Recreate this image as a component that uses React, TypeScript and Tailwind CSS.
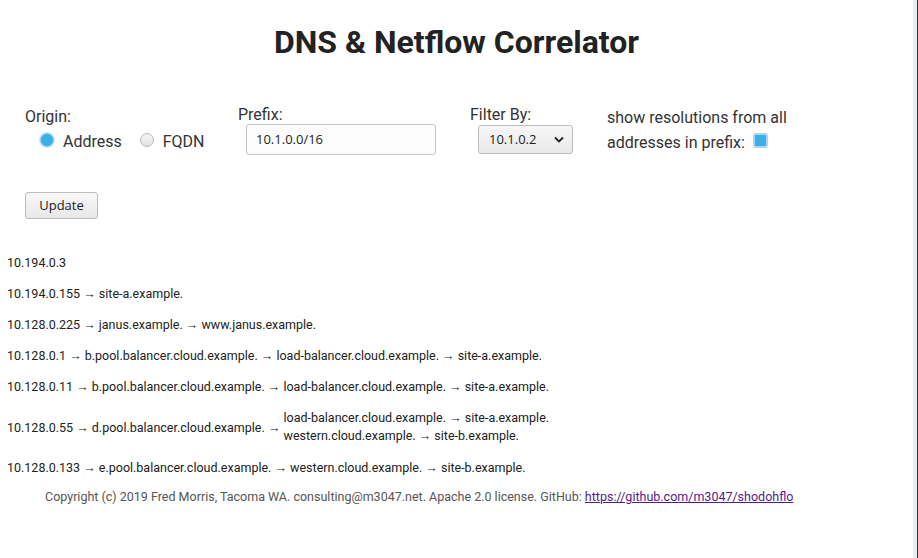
import React from "react";

const rows: string[][] = [
  ["10.194.0.3"],
  ["10.194.0.155", "site-a.example."],
  ["10.128.0.225", "janus.example.", "www.janus.example."],
  ["10.128.0.1", "b.pool.balancer.cloud.example.", "load-balancer.cloud.example.", "site-a.example."],
  ["10.128.0.11", "b.pool.balancer.cloud.example.", "load-balancer.cloud.example.", "site-a.example."],
];

function Chain({ parts }: { parts: string[] }) {
  return <span>{parts.join(" \u2192 ")}</span>;
}

function Radio({ checked }: { checked?: boolean }) {
  return checked ? (
    <span className="block h-[14px] w-[14px] shrink-0 rounded-full border border-[#93cef0] bg-[#3daee9] shadow-[0_0_0_1px_#cfe9f8]" />
  ) : (
    <span className="block h-[14px] w-[14px] shrink-0 rounded-full border border-[#b9b9b9] bg-gradient-to-b from-[#f4f4f4] to-[#e4e4e4]" />
  );
}

export default function App() {
  return (
    <div className="flex min-h-screen bg-white font-['Roboto',sans-serif] text-[#333]">
      <div className="flex-1">
        <h1 className="pt-[23px] text-center text-[32px] font-bold leading-[38px] text-[#222]">
          DNS &amp; Netflow Correlator
        </h1>

        <div className="mt-[44px] flex items-start pl-[25px] text-[16px]">
          <div className="w-[213px] pt-[2px]">
            <div className="leading-[20px]">Origin:</div>
            <div className="ml-[15px] mt-[3px] flex h-[20px] items-center">
              <Radio checked />
              <span className="ml-[9px] mt-[3px]">Address</span>
              <span className="ml-[18px]">
                <Radio />
              </span>
              <span className="ml-[9px] mt-[3px]">FQDN</span>
            </div>
          </div>

          <div className="w-[232px]">
            <div className="leading-[19px]">Prefix:</div>
            <div className="ml-[8px] flex h-[31px] w-[190px] items-center rounded-[3px] border border-[#c4c4c4] bg-[#fcfcfc] pl-[9px] font-['Open_Sans',sans-serif] text-[13px] text-[#222]">
              10.1.0.0/16
            </div>
          </div>

          <div className="w-[137px]">
            <div className="leading-[20px]">Filter By:</div>
            <div className="ml-[8px] flex h-[29px] w-[95px] items-center justify-between rounded-[3px] border border-[#bdbdbd] bg-gradient-to-b from-[#f7f7f7] to-[#e9e9e9] pl-[10px] pr-[8px] font-['Open_Sans',sans-serif] text-[13px] text-[#222]">
              <span>10.1.0.2</span>
              <svg width="10" height="7" viewBox="0 0 10 7" fill="none">
                <path d="M1 1.5 5 5.5 9 1.5" stroke="#222" strokeWidth="1.8" />
              </svg>
            </div>
          </div>

          <div className="leading-[25px]">
            <div>show resolutions from all</div>
            <div className="flex items-center">
              addresses in prefix:
              <span className="ml-[8px] mb-[4px] h-[15px] w-[15px] rounded-[3px] border-2 border-[#a6d8f4] bg-[#3daee9]" />
            </div>
          </div>
        </div>

        <div className="ml-[25px] mt-[37px] flex h-[27px] w-[73px] items-center justify-center rounded-[3px] border border-[#bdbdbd] bg-gradient-to-b from-[#f8f8f8] to-[#e8e8e8] font-['Open_Sans',sans-serif] text-[13px] text-[#222]">
          Update
        </div>

        <div className="mt-[36px] flex flex-col gap-[16px] pl-[7px] text-[12.5px] leading-[15px] text-[#222]">
          {rows.map((r, i) => (
            <div key={i}>
              <Chain parts={r} />
            </div>
          ))}
          <div className="-my-[1px] flex items-center">
            <span className="whitespace-pre">10.128.0.55 {"\u2192"} d.pool.balancer.cloud.example. {"\u2192"} </span>
            <div className="flex flex-col leading-[18px]">
              <span>load-balancer.cloud.example. {"\u2192"} site-a.example.</span>
              <span>western.cloud.example. {"\u2192"} site-b.example.</span>
            </div>
          </div>
          <div>
            <Chain
              parts={[
                "10.128.0.133",
                "e.pool.balancer.cloud.example.",
                "western.cloud.example.",
                "site-b.example.",
              ]}
            />
          </div>
        </div>

        <div className="mt-[14px] pl-[45px] text-[12.5px] leading-[15px] text-[#555]">
          Copyright (c) 2019 Fred Morris, Tacoma WA. consulting@m3047.net. Apache 2.0 license. GitHub:{" "}
          <a href="#" className="text-[#551a8b] underline">
            https://github.com/m3047/shodohflo
          </a>
        </div>
      </div>
      <div className="w-[4px] bg-[#eceef0]" />
      <div className="w-[1px] bg-[#1c3a34]" />
    </div>
  );
}
